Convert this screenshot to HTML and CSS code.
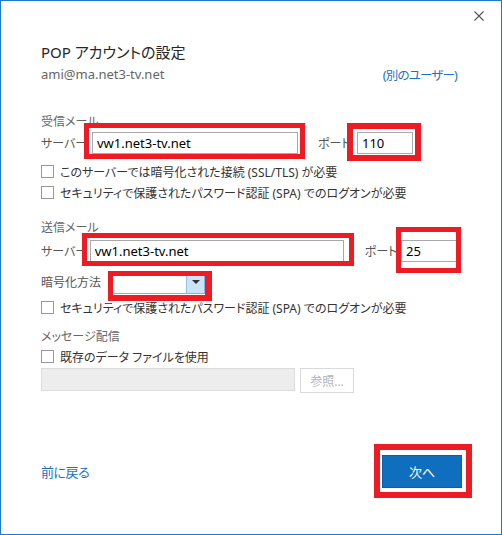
FILE: index.html
```html
<!DOCTYPE html>
<html lang="ja">
  <head>
    <meta charset="UTF-8" />
    <meta name="viewport" content="width=device-width, initial-scale=1.0" />
    <title>POP アカウントの設定</title>
    <link rel="stylesheet" href="styles.css">
  </head>
  <body>
    <div class="dialog">
      <div class="top">
        <span class="close">
          <svg width="10" height="10" viewBox="0 0 10 10">
            <path d="M0.5 0.5 L9.5 9.5 M9.5 0.5 L0.5 9.5" stroke="#555" stroke-width="1.1" fill="none" />
          </svg>
        </span>
      </div>

      <div class="content">
        <h1 class="title">POP アカウントの設定</h1>
        <div class="account">
          <span class="email">ami@ma.net3-tv.net</span>
          <a class="link other" href="#">(別のユーザー)</a>
        </div>

        <!-- 受信 -->
        <div class="group first">受信メール</div>
        <div class="row">
          <span class="lbl">サーバー</span>
          <span class="wrap">
            <input class="txt server1" type="text" value="vw1.net3-tv.net">
            <span class="mark mark-s1"></span>
          </span>
          <span class="port-lbl p1">ポート</span>
          <span class="wrap">
            <input class="txt port" type="text" value="110">
            <span class="mark mark-p1"></span>
          </span>
        </div>
        <div class="checks">
          <div class="check-row"><span class="box"></span>このサーバーでは暗号化された接続 (SSL/TLS) が必要</div>
          <div class="check-row"><span class="box"></span>セキュリティで保護されたパスワード認証 (SPA) でのログオンが必要</div>
        </div>

        <!-- 送信 -->
        <div class="group second">送信メール</div>
        <div class="row row2">
          <span class="lbl">サーバー</span>
          <span class="wrap">
            <input class="txt server2" type="text" value="vw1.net3-tv.net">
            <span class="mark mark-s2"></span>
          </span>
          <span class="port-lbl p2">ポート</span>
          <span class="wrap">
            <input class="txt port" type="text" value="25">
            <span class="mark mark-p2"></span>
          </span>
        </div>
        <div class="row row3">
          <span class="lbl wide">暗号化方法</span>
          <span class="wrap">
            <span class="select">
              <span class="select-val"></span>
              <span class="select-btn"><span class="arrow"></span></span>
            </span>
            <span class="mark mark-enc"></span>
          </span>
        </div>
        <div class="check-row check3"><span class="box"></span>セキュリティで保護されたパスワード認証 (SPA) でのログオンが必要</div>

        <!-- 配信 -->
        <div class="group third">メッセージ配信</div>
        <div class="check-row check4"><span class="box"></span>既存のデータ ファイルを使用</div>
        <div class="file-row">
          <span class="file-field"></span>
          <span class="browse">参照...</span>
        </div>
      </div>

      <div class="footer">
        <a class="link back" href="#">前に戻る</a>
        <span class="wrap">
          <button class="next">次へ</button>
          <span class="mark mark-next"></span>
        </span>
      </div>
    </div>
  </body>
</html>
```

FILE: styles.css
```css
body {
  margin: 0;
  padding: 0;
  font-family: "Noto Sans", "Noto Sans CJK JP", sans-serif;
}

.dialog {
  width: 502px;
  height: 535px;
  box-sizing: border-box;
  border: 1px solid #1b7ad0;
  background: #ffffff;
  display: flex;
  flex-direction: column;
  font-feature-settings: "palt";
}

.top {
  height: 30px;
  display: flex;
  justify-content: flex-end;
  align-items: center;
  padding-right: 17px;
}
.close {
  display: flex;
}

.content {
  padding: 0 44px 0 40px;
}

.title {
  margin: 10px 0 0;
  height: 22px;
  line-height: 22px;
  font-size: 15px;
  font-weight: normal;
  color: #262626;
}

.account {
  height: 22px;
  display: flex;
  justify-content: space-between;
  align-items: center;
  font-size: 13px;
  color: #666666;
}

.link {
  color: #1a73c8;
  text-decoration: none;
  font-size: 13px;
}
.link.other {
  font-size: 12.5px;
  letter-spacing: -0.8px;
}
.link.back {
  letter-spacing: -0.5px;
}

.group {
  height: 16px;
  line-height: 16px;
  font-size: 12px;
  color: #666666;
}
.group.first {
  margin-top: 29px;
}
.group.second {
  margin-top: 17px;
}
.group.third {
  margin-top: 11px;
}

.row {
  display: flex;
  align-items: center;
  height: 26px;
}
.row2 {
  margin-top: 2px;
}
.row3 {
  margin-top: 6px;
  height: 24px;
}

.lbl {
  width: 51px;
  font-size: 12px;
  color: #555555;
}
.lbl.wide {
  width: 71px;
}

.wrap {
  position: relative;
  display: inline-flex;
}

.txt {
  height: 22px;
  box-sizing: border-box;
  border: 1px solid #a9a9a9;
  padding: 0 4px;
  margin: 0;
  font-family: "Noto Sans", sans-serif;
  font-size: 13px;
  color: #000000;
  background: #ffffff;
  outline: none;
}
.server1 {
  width: 206px;
}
.server2 {
  width: 254px;
}
.port {
  width: 56px;
}

.port-lbl {
  font-size: 12px;
  color: #555555;
}
.p1 {
  margin-left: 20px;
  width: 39px;
}
.p2 {
  margin-left: 21px;
  width: 38px;
}

/* red annotation frames */
.mark {
  position: absolute;
  border: 5px solid #ed1c24;
  pointer-events: none;
}
.mark-s1 {
  left: -8px;
  right: -7px;
  top: -9px;
  bottom: -5px;
}
.mark-p1 {
  left: -10px;
  right: -8px;
  top: -9px;
  bottom: -7px;
  border-width: 6px;
}
.mark-s2 {
  left: -8px;
  right: -10px;
  top: -7px;
  bottom: -4px;
}
.mark-p2 {
  left: -5px;
  right: -4px;
  top: -13px;
  bottom: -11px;
}
.mark-enc {
  left: -4px;
  right: -7px;
  top: 0;
  bottom: -7px;
  border-width: 5px 7px 6px 5px;
}
.mark-next {
  left: -8px;
  right: -10px;
  top: -11px;
  bottom: -10px;
  border-width: 6px;
}

.checks {
  margin-top: 5px;
}
.check-row {
  height: 21px;
  display: flex;
  align-items: center;
  gap: 6px;
  font-size: 12px;
  color: #333333;
}
.check3 {
  margin-top: 3px;
}
.check4 {
  margin-top: 1px;
}
.box {
  width: 13px;
  height: 13px;
  box-sizing: border-box;
  border: 1px solid #999999;
  background: #ffffff;
}

.select {
  width: 93px;
  height: 23px;
  box-sizing: border-box;
  border: 1px solid #7eb4ea;
  display: flex;
  background: #ffffff;
}
.select-val {
  flex: 1;
}
.select-btn {
  width: 17px;
  background: #cce4f7;
  border-left: 1px solid #8fc0ec;
  display: flex;
  align-items: center;
  justify-content: center;
}
.arrow {
  width: 0;
  height: 0;
  border-left: 4px solid transparent;
  border-right: 4px solid transparent;
  border-top: 4px solid #333333;
}

.file-row {
  margin-top: 1px;
  display: flex;
  align-items: flex-start;
  gap: 5px;
}
.file-field {
  width: 254px;
  height: 23px;
  box-sizing: border-box;
  border: 1px solid #dcdcdc;
  background: #ededed;
}
.browse {
  width: 54px;
  height: 25px;
  box-sizing: border-box;
  border: 1px solid #dadada;
  background: #ffffff;
  color: #b4b4b4;
  font-size: 12px;
  display: flex;
  align-items: center;
  justify-content: center;
}

.footer {
  margin-top: 62px;
  padding: 0 39px 0 40px;
  height: 33px;
  display: flex;
  justify-content: space-between;
  align-items: center;
}
.next {
  width: 80px;
  height: 33px;
  margin: 0;
  border: 1px solid #0e5ca3;
  background: #106ebe;
  color: #ffffff;
  font-family: "Noto Sans", "Noto Sans CJK JP", sans-serif;
  font-size: 13px;
  cursor: pointer;
}
```
